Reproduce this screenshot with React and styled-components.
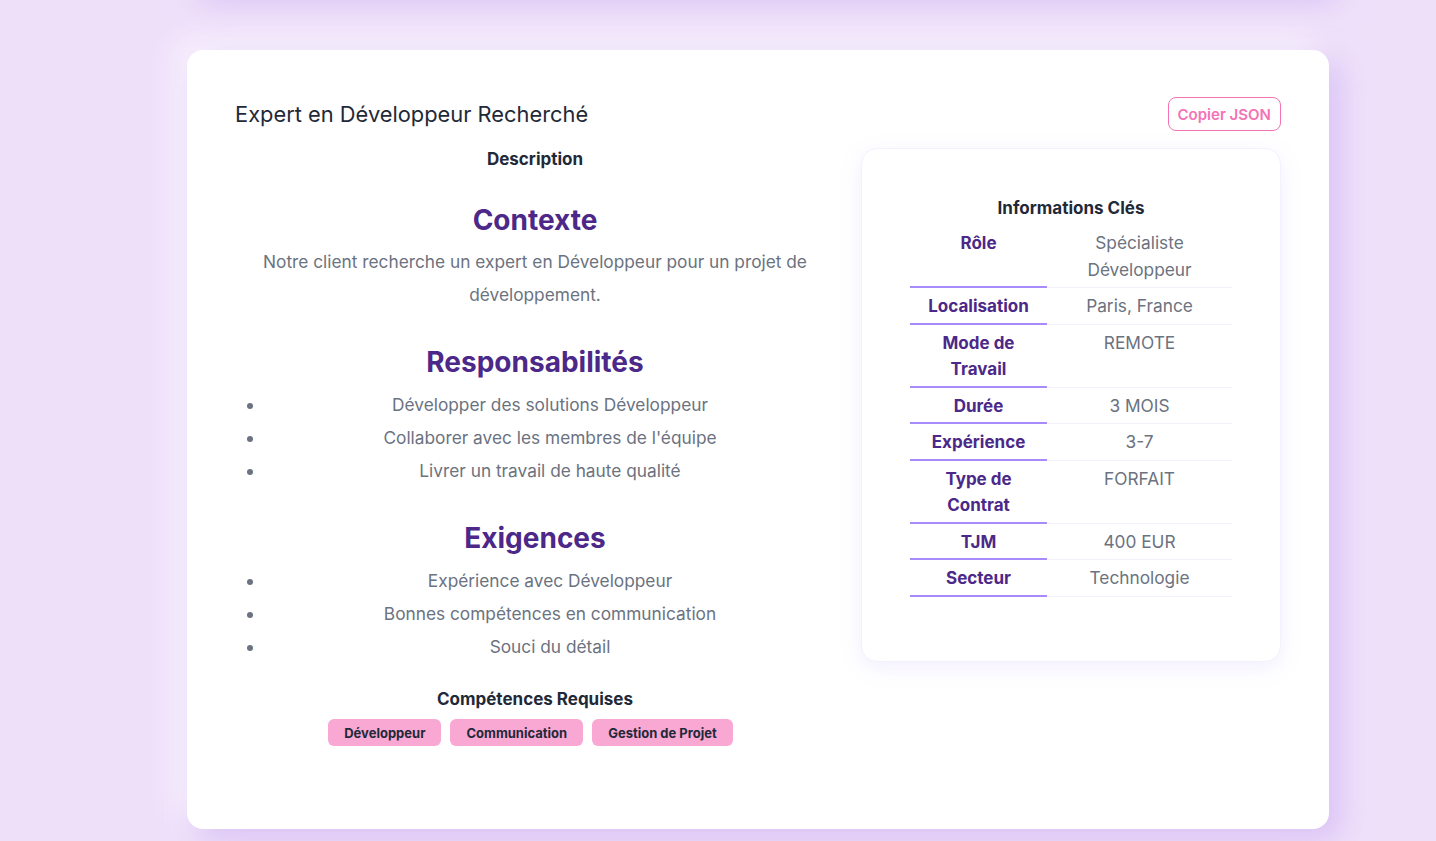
import React from 'react';
import styled, { createGlobalStyle } from 'styled-components';

const GlobalStyle = createGlobalStyle`
    html, body {
        margin: 0;
        padding: 0;
        background: #efe0fa;
    }

    body {
        font-family: Inter, "Noto Sans", sans-serif;
        color: #1f2937;
        overflow: hidden;
    }

    * {
        box-sizing: border-box;
    }
`;

const Page = styled.main`
    min-height: 100vh;
    padding-left: 80px;
    background: #efe0fa;
`;

const Feed = styled.div`
    max-width: 1142px;
    margin: -170px auto 0;
    display: flex;
    flex-direction: column;
    gap: 60px;
    padding-bottom: 60px;
`;

const Card = styled.article`
    background: #ffffff;
    border-radius: 16px;
    padding: 47px 48px 48px;
    box-shadow: 10px 10px 30px rgba(196, 164, 240, 0.55),
        -10px -10px 30px rgba(255, 255, 255, 0.75);
`;

const PreviousCard = styled(Card)`
    height: 160px;
    padding: 0;
`;

const Header = styled.header`
    display: flex;
    align-items: center;
    justify-content: space-between;
    margin-bottom: 17px;
`;

const Title = styled.h1`
    margin: 0;
    font-size: 21.85px;
    font-weight: 400;
    line-height: 34px;
    color: #1f2937;
`;

const CopyButton = styled.button`
    font-family: inherit;
    font-size: 15px;
    font-weight: 600;
    color: #f472b6;
    background: transparent;
    border: 1px solid #f472b6;
    border-radius: 8px;
    height: 34px;
    padding: 0 9px;
    cursor: pointer;
`;

const Columns = styled.div`
    display: grid;
    grid-template-columns: 1fr 420px;
    gap: 26px;
    align-items: start;
`;

const Description = styled.div`
    text-align: center;
    padding-bottom: 35px;
`;

const Label = styled.h3`
    margin: 0;
    font-size: 17px;
    font-weight: 700;
    line-height: 22px;
    color: #1f2937;
`;

const Section = styled.section`
    margin-top: ${p => p.$top || 34}px;
`;

const SectionTitle = styled.h2`
    margin: 0 0 9px;
    font-size: 28px;
    font-weight: 700;
    line-height: 34px;
    color: #4c2889;
`;

const Paragraph = styled.p`
    margin: -1px auto 1px;
    max-width: 570px;
    font-size: 17.3px;
    line-height: 33px;
    color: #6b7280;
`;

const List = styled.ul`
    margin: 0;
    padding-left: 30px;
    list-style: disc;
    color: #6b7280;

    li {
        font-size: 17.3px;
        line-height: 33px;
        text-align: center;
    }
`;

const Tags = styled.div`
    display: flex;
    justify-content: center;
    margin-top: 9px;
`;

const Tag = styled.span`
    display: inline-flex;
    align-items: center;
    height: 27px;
    padding: 0 16px;
    margin-right: 9px;
    border-radius: 6px;
    background: #f9a8d4;
    color: #1f2937;
    font-size: 13px;
    font-weight: 700;
`;

const InfoCard = styled.aside`
    background: #ffffff;
    border-radius: 16px;
    border: 1px solid #f5f0fe;
    padding: 48px 48px 64px;
    box-shadow: 0 6px 22px rgba(167, 139, 250, 0.14);
`;

const InfoTitle = styled(Label)`
    text-align: center;
    margin-bottom: 6px;
`;

const Table = styled.table`
    width: 100%;
    border-collapse: separate;
    border-spacing: 0;
    font-size: 17.3px;
    line-height: 26.5px;
`;

const KeyCell = styled.th`
    width: 137px;
    padding: 5px 6px 3px;
    vertical-align: top;
    font-size: 17px;
    font-weight: 700;
    color: #4c2889;
    text-align: center;
    border-bottom: 2px solid #a78bfa;
`;

const ValueCell = styled.td`
    padding: 5px 6px 4px;
    vertical-align: top;
    color: #6b7280;
    text-align: center;
    border-bottom: 1px solid #f3f0fb;
`;

const infos = [
    ['Rôle', 'Spécialiste Développeur'],
    ['Localisation', 'Paris, France'],
    ['Mode de Travail', 'REMOTE'],
    ['Durée', '3 MOIS'],
    ['Expérience', '3-7'],
    ['Type de Contrat', 'FORFAIT'],
    ['TJM', '400 EUR'],
    ['Secteur', 'Technologie'],
];

const responsabilites = [
    'Développer des solutions Développeur',
    "Collaborer avec les membres de l'équipe",
    'Livrer un travail de haute qualité',
];

const exigences = [
    'Expérience avec Développeur',
    'Bonnes compétences en communication',
    'Souci du détail',
];

const skills = ['Développeur', 'Communication', 'Gestion de Projet'];

const App = () => {
    return (
        <Page>
            <GlobalStyle />
            <Feed>
                <PreviousCard />
                <Card>
                    <Header>
                        <Title>Expert en Développeur Recherché</Title>
                        <CopyButton>Copier JSON</CopyButton>
                    </Header>
                    <Columns>
                        <Description>
                            <Label>Description</Label>

                            <Section $top={33}>
                                <SectionTitle>Contexte</SectionTitle>
                                <Paragraph>
                                    Notre client recherche un expert en Développeur pour un projet de développement.
                                </Paragraph>
                            </Section>

                            <Section>
                                <SectionTitle>Responsabilités</SectionTitle>
                                <List>
                                    {responsabilites.map(item => <li key={item}>{item}</li>)}
                                </List>
                            </Section>

                            <Section>
                                <SectionTitle>Exigences</SectionTitle>
                                <List>
                                    {exigences.map(item => <li key={item}>{item}</li>)}
                                </List>
                            </Section>

                            <Section $top={25}>
                                <Label>Compétences Requises</Label>
                                <Tags>
                                    {skills.map(skill => <Tag key={skill}>{skill}</Tag>)}
                                </Tags>
                            </Section>
                        </Description>

                        <InfoCard>
                            <InfoTitle>Informations Clés</InfoTitle>
                            <Table>
                                <tbody>
                                    {infos.map(([key, value]) => (
                                        <tr key={key}>
                                            <KeyCell>{key}</KeyCell>
                                            <ValueCell>{value}</ValueCell>
                                        </tr>
                                    ))}
                                </tbody>
                            </Table>
                        </InfoCard>
                    </Columns>
                </Card>
            </Feed>
        </Page>
    );
};

export default App;
